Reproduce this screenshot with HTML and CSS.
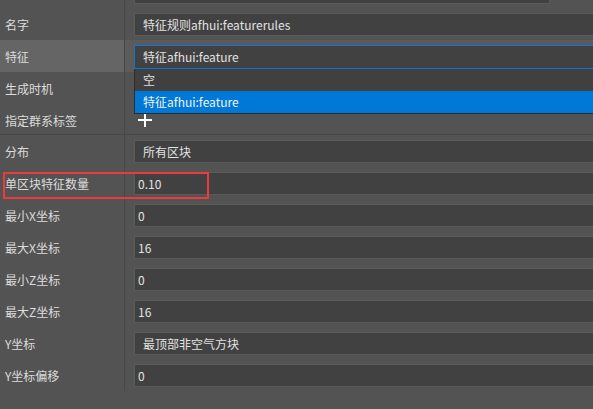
FILE: index.html
```html
<!DOCTYPE html>
<html lang="zh">
<head>
<meta charset="utf-8">
<link rel="stylesheet" href="styles.css">
</head>
<body>
<div class="panel">
  <div class="row stub">
    <div class="label"></div>
    <div class="value"><div class="stub-box"></div></div>
  </div>
  <div class="row">
    <div class="label">名字</div>
    <div class="value"><div class="field combo">特征规则afhui:featurerules</div></div>
  </div>
  <div class="row selected">
    <div class="label">特征</div>
    <div class="value"><div class="field combo open">特征afhui:feature</div></div>
  </div>
  <div class="row">
    <div class="label">生成时机</div>
    <div class="value"></div>
  </div>
  <div class="row group">
    <div class="label">指定群系标签</div>
    <div class="value">
      <svg class="plus" width="16" height="16" viewBox="0 0 16 16"><path d="M8 1v14M1 8h14" stroke="#ffffff" stroke-width="2" fill="none"/></svg>
    </div>
  </div>
  <div class="row">
    <div class="label">分布</div>
    <div class="value"><div class="field combo">所有区块</div></div>
  </div>
  <div class="row">
    <div class="label">单区块特征数量</div>
    <div class="value"><div class="field">0.10</div></div>
  </div>
  <div class="row">
    <div class="label">最小X坐标</div>
    <div class="value"><div class="field">0</div></div>
  </div>
  <div class="row">
    <div class="label">最大X坐标</div>
    <div class="value"><div class="field">16</div></div>
  </div>
  <div class="row">
    <div class="label">最小Z坐标</div>
    <div class="value"><div class="field">0</div></div>
  </div>
  <div class="row">
    <div class="label">最大Z坐标</div>
    <div class="value"><div class="field">16</div></div>
  </div>
  <div class="row">
    <div class="label">Y坐标</div>
    <div class="value"><div class="field combo">最顶部非空气方块</div></div>
  </div>
  <div class="row">
    <div class="label">Y坐标偏移</div>
    <div class="value"><div class="field">0</div></div>
  </div>
  <div class="popup">
    <div class="item">空</div>
    <div class="item active">特征afhui:feature</div>
  </div>
  <div class="highlight-box"></div>
</div>
</body>
</html>
```
FILE: styles.css
```css
html, body {
  margin: 0;
  padding: 0;
  background: #535353;
  overflow: hidden;
}
body {
  width: 593px;
  height: 409px;
  font-family: "Noto Sans CJK SC", "Noto Sans", sans-serif;
  font-size: 12px;
  color: #dcdcdc;
}
.panel {
  position: relative;
  width: 593px;
  height: 409px;
  overflow: hidden;
}
.row {
  display: flex;
  height: 32px;
}
.row.stub {
  height: 8px;
}
.row.group {
  height: 31px;
  border-bottom: 1px solid #484848;
  box-sizing: border-box;
}
.label {
  width: 124px;
  flex: none;
  border-right: 1px solid #474747;
  box-sizing: content-box;
  padding: 5px 0 0 5px;
  margin-left: -5px;
  text-indent: 5px;
  line-height: 23px;
  white-space: nowrap;
}
.value {
  flex: 1;
  padding: 5px 0 0 9px;
  min-width: 0;
}
.row.stub .label, .row.stub .value {
  padding-top: 0;
}
.row:last-of-type .label {
  height: 27px;
}
.stub-box {
  width: 416px;
  height: 4px;
  background: #414141;
  border: 1px solid #5a5a5a;
  border-top: none;
  box-sizing: border-box;
}
.row.selected .label {
  background: #656565;
}
.row.selected .value {
  background: #5b5b5b;
}
.field {
  width: 480px;
  height: 23px;
  box-sizing: border-box;
  background: #414141;
  border: 1px solid #5a5a5a;
  line-height: 21px;
  padding-left: 3px;
  color: #e2e2e2;
  white-space: nowrap;
}
.field.combo {
  padding-left: 8px;
}
.field.open {
  height: 24px;
  border-color: #0a78d7;
  line-height: 22px;
}
.plus {
  display: block;
  margin: 3px 0 0 3px;
}
.popup {
  position: absolute;
  left: 134px;
  top: 69px;
  width: 480px;
  border-left: 1px solid #2d2d2d;
  border-bottom: 1px solid #2b2b2b;
  background: #404040;
}
.item {
  height: 22px;
  line-height: 22px;
  padding-left: 8px;
  color: #e0e0e0;
}
.item.active {
  background: #0078d7;
  color: #f2f2f2;
}
.highlight-box {
  position: absolute;
  left: 3px;
  top: 172px;
  width: 206px;
  height: 27px;
  border: 2px solid #ea3b3d;
  box-sizing: border-box;
}
```
